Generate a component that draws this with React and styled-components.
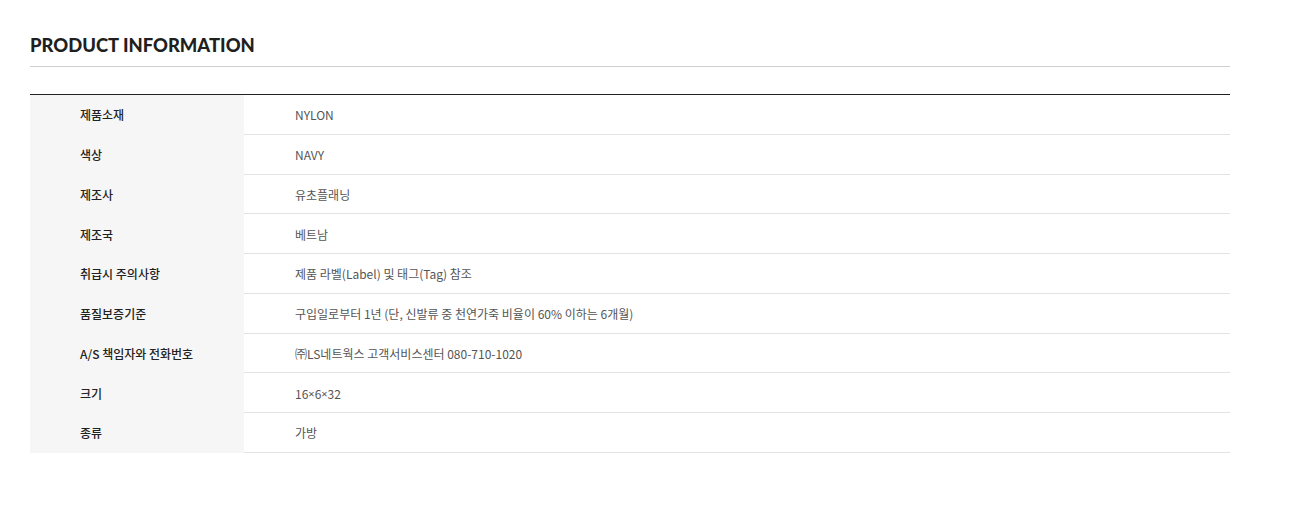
import React from "react";
import styled, { createGlobalStyle } from "styled-components";

const Global = createGlobalStyle`
  html, body { margin: 0; padding: 0; background: #fff; }
  body { font-family: "Noto Sans CJK KR", "Noto Sans", sans-serif; }
`;

const Wrap = styled.section`
  width: 1200px;
  padding: 0 0 0 30px;
`;

const Header = styled.div`
  height: 67px;
  box-sizing: border-box;
  border-bottom: 1px solid #cfcfcf;
  display: flex;
  align-items: center;
  padding-top: 24px;
`;

const Title = styled.h2`
  margin: 0;
  font-family: Lato, "Noto Sans", sans-serif;
  font-weight: 900;
  font-size: 18.4px;
  color: #1f1f1f;
`;

const Table = styled.div`
  margin-top: 27px;
  border-top: 1px solid #222;
  display: grid;
  grid-template-columns: 214px 1fr;
`;

const Label = styled.div`
  background: #f6f6f6;
  padding-left: 50px;
  height: 39.75px;
  display: flex;
  align-items: center;
  font-size: 12px;
  font-weight: 500;
  color: #222;
`;

const Value = styled.div`
  height: 39.75px;
  box-sizing: border-box;
  border-bottom: 1px solid #e3e3e3;
  padding-left: 51px;
  padding-top: 1px;
  display: flex;
  align-items: center;
  font-size: 12px;
  color: #555;
  white-space: pre;
`;

const Times = styled.span`
  font-family: "Noto Sans", sans-serif;
  font-size: 11px;
`;

const rows = [
  ["제품소재", "NYLON"],
  ["색상", "NAVY"],
  ["제조사", "유초플래닝"],
  ["제조국", "베트남"],
  ["취급시 주의사항", "제품 라벨(Label) 및 태그(Tag) 참조"],
  ["품질보증기준", "구입일로부터 1년 (단, 신발류 중 천연가죽 비율이 60% 이하는 6개월)"],
  ["A/S 책임자와 전화번호", "㈜LS네트웍스 고객서비스센터 080-710-1020"],
  ["크기", <>16<Times>×</Times>6<Times>×</Times>32</>],
  ["종류", "가방"],
];

export default function App() {
  return (
    <>
      <Global />
      <Wrap>
        <Header>
          <Title>PRODUCT INFORMATION</Title>
        </Header>
        <Table>
          {rows.map(([k, v]) => (
            <React.Fragment key={k}>
              <Label>{k}</Label>
              <Value>{v}</Value>
            </React.Fragment>
          ))}
        </Table>
      </Wrap>
    </>
  );
}
